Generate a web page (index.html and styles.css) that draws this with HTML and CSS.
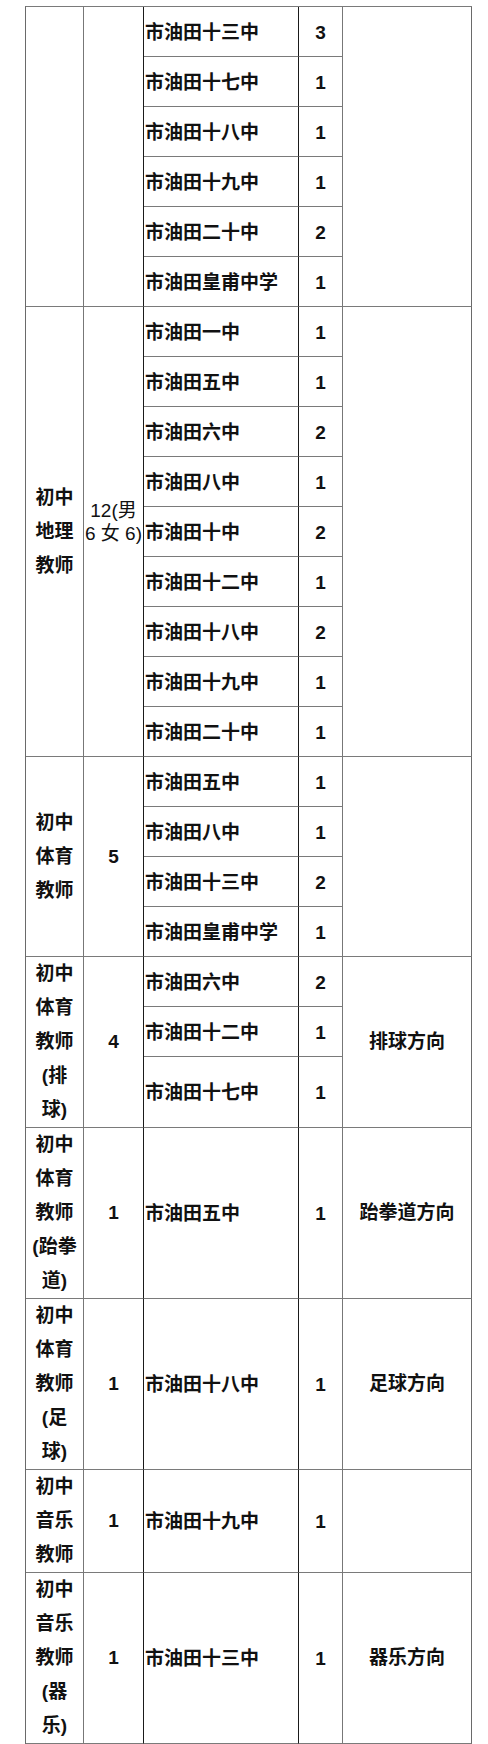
FILE: index.html
```html
<!DOCTYPE html>
<html lang="zh-CN">
<head>
<meta charset="utf-8">
<title>岗位表</title>
<link rel="stylesheet" href="styles.css">
</head>
<body>
<table class="plan">
  <colgroup>
    <col class="c-post"><col class="c-total"><col class="c-school"><col class="c-num"><col class="c-note">
  </colgroup>
  <tbody>
    <tr class="r">
      <td class="post" rowspan="6"></td>
      <td class="total" rowspan="6"></td>
      <td class="school">市油田十三中</td>
      <td class="num">3</td>
      <td class="note" rowspan="6"></td>
    </tr>
    <tr class="r"><td class="school">市油田十七中</td><td class="num">1</td></tr>
    <tr class="r"><td class="school">市油田十八中</td><td class="num">1</td></tr>
    <tr class="r"><td class="school">市油田十九中</td><td class="num">1</td></tr>
    <tr class="r"><td class="school">市油田二十中</td><td class="num">2</td></tr>
    <tr class="r"><td class="school">市油田皇甫中学</td><td class="num">1</td></tr>

    <tr class="r">
      <td class="post" rowspan="9">初中<br>地理<br>教师</td>
      <td class="total mixed" rowspan="9">12(男<br>6 女 6)</td>
      <td class="school">市油田一中</td>
      <td class="num">1</td>
      <td class="note" rowspan="9"></td>
    </tr>
    <tr class="r"><td class="school">市油田五中</td><td class="num">1</td></tr>
    <tr class="r"><td class="school">市油田六中</td><td class="num">2</td></tr>
    <tr class="r"><td class="school">市油田八中</td><td class="num">1</td></tr>
    <tr class="r"><td class="school">市油田十中</td><td class="num">2</td></tr>
    <tr class="r"><td class="school">市油田十二中</td><td class="num">1</td></tr>
    <tr class="r"><td class="school">市油田十八中</td><td class="num">2</td></tr>
    <tr class="r"><td class="school">市油田十九中</td><td class="num">1</td></tr>
    <tr class="r"><td class="school">市油田二十中</td><td class="num">1</td></tr>

    <tr class="r">
      <td class="post" rowspan="4">初中<br>体育<br>教师</td>
      <td class="total" rowspan="4">5</td>
      <td class="school">市油田五中</td>
      <td class="num">1</td>
      <td class="note" rowspan="4"></td>
    </tr>
    <tr class="r"><td class="school">市油田八中</td><td class="num">1</td></tr>
    <tr class="r"><td class="school">市油田十三中</td><td class="num">2</td></tr>
    <tr class="r"><td class="school">市油田皇甫中学</td><td class="num">1</td></tr>

    <tr class="r">
      <td class="post" rowspan="3">初中<br>体育<br>教师<br>(排<br>球)</td>
      <td class="total" rowspan="3">4</td>
      <td class="school">市油田六中</td>
      <td class="num">2</td>
      <td class="note" rowspan="3">排球方向</td>
    </tr>
    <tr class="r"><td class="school">市油田十二中</td><td class="num">1</td></tr>
    <tr class="r tall"><td class="school">市油田十七中</td><td class="num">1</td></tr>

    <tr>
      <td class="post">初中<br>体育<br>教师<br>(跆拳<br>道)</td>
      <td class="total">1</td>
      <td class="school">市油田五中</td>
      <td class="num">1</td>
      <td class="note">跆拳道方向</td>
    </tr>

    <tr>
      <td class="post">初中<br>体育<br>教师<br>(足<br>球)</td>
      <td class="total">1</td>
      <td class="school">市油田十八中</td>
      <td class="num">1</td>
      <td class="note">足球方向</td>
    </tr>

    <tr>
      <td class="post">初中<br>音乐<br>教师</td>
      <td class="total">1</td>
      <td class="school">市油田十九中</td>
      <td class="num">1</td>
      <td class="note"></td>
    </tr>

    <tr>
      <td class="post">初中<br>音乐<br>教师<br>(器<br>乐)</td>
      <td class="total">1</td>
      <td class="school">市油田十三中</td>
      <td class="num">1</td>
      <td class="note">器乐方向</td>
    </tr>
  </tbody>
</table>
</body>
</html>
```
FILE: styles.css
```css
html, body {
  margin: 0;
  padding: 0;
  background: #ffffff;
}

body {
  padding: 6px 0 0 25px;
  font-family: "Liberation Sans", "Noto Sans CJK SC", sans-serif;
  color: #111111;
}

.plan {
  border-collapse: separate;
  border-spacing: 0;
  border-top: 1px solid #7a7a7a;
  border-left: 1px solid #6a6a6a;
  table-layout: fixed;
  width: 446px;
}

.c-post { width: 58px; }
.c-total { width: 60px; }
.c-school { width: 155px; }
.c-num { width: 44px; }
.c-note { width: 129px; }

.plan td {
  box-sizing: border-box;
  border-right: 1px solid #777777;
  border-bottom: 1px solid #7a7a7a;
  padding: 0;
  font-size: 19px;
  line-height: 34px;
  font-weight: 700;
  vertical-align: middle;
  text-align: center;
  white-space: nowrap;
}

.plan tr.r > td.school,
.plan tr.r > td.num {
  height: 50px;
}

.plan tr.tall > td.school,
.plan tr.tall > td.num {
  height: 71px;
}

.plan td.total {
  border-right-color: #1a1a1a;
}

.plan td.school {
  text-align: left;
  padding-left: 1px;
  border-right-color: #1a1a1a;
  padding-top: 2px;
}

.plan td.num {
  padding-top: 2px;
}

.plan td.note {
  border-right-color: #6a6a6a;
}

.plan td.mixed {
  font-weight: 400;
  line-height: 23px;
  padding-bottom: 20px;
}
```
